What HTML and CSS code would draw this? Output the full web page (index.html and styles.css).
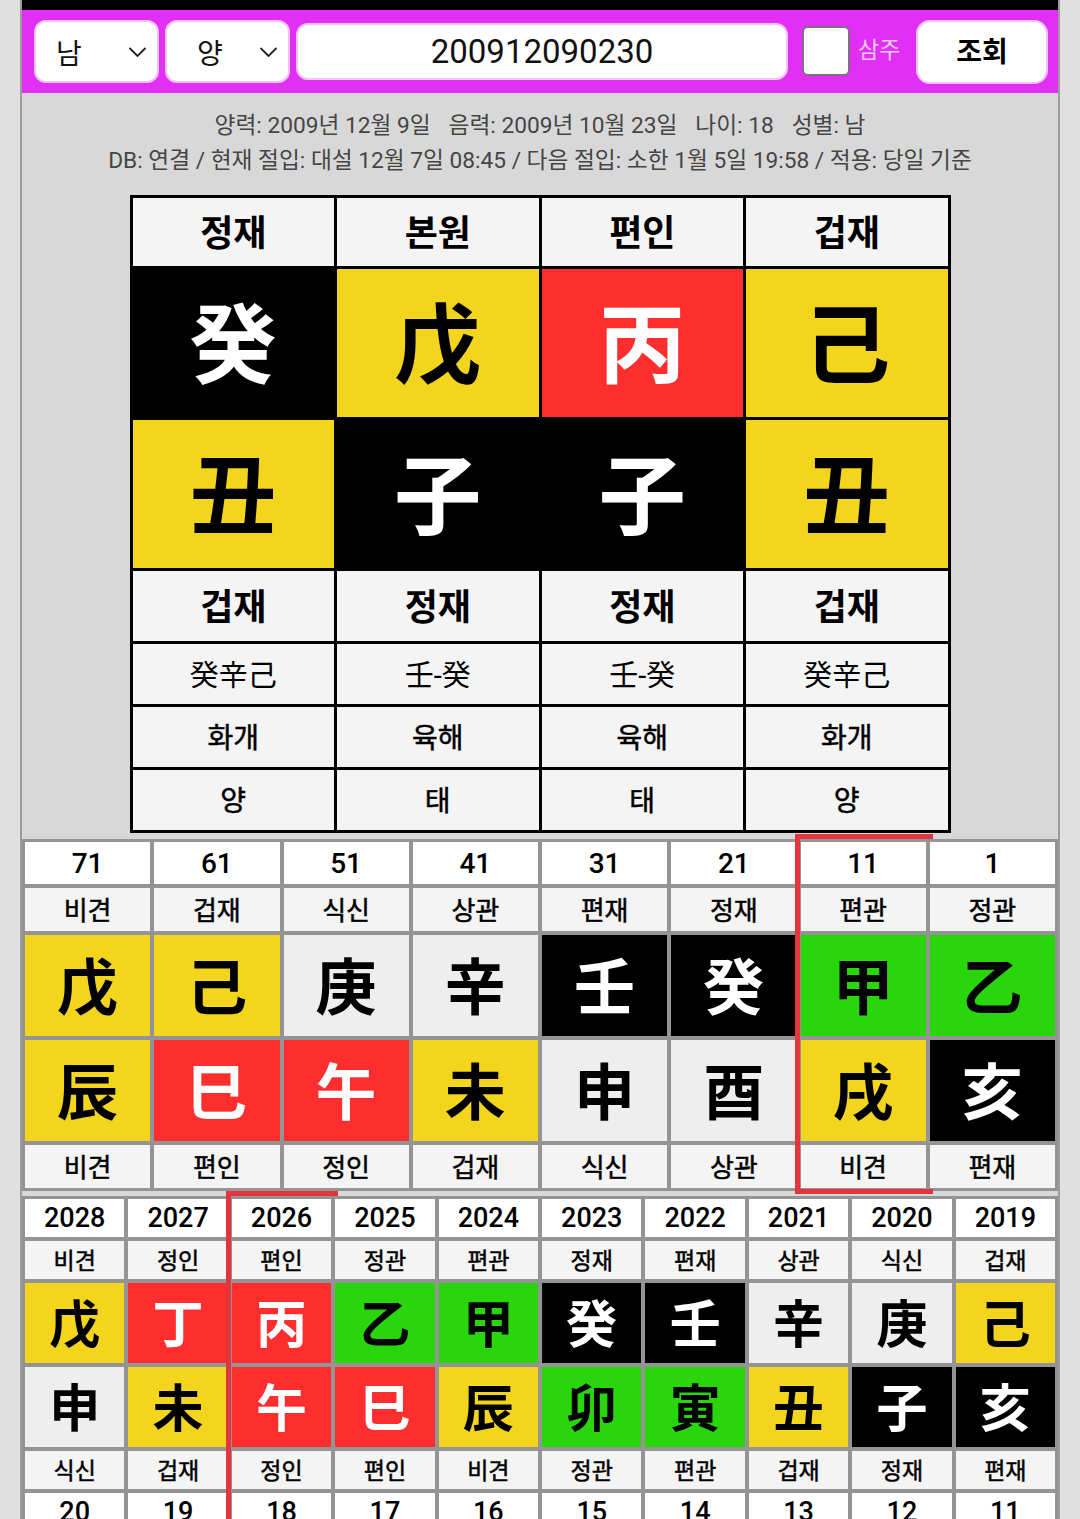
FILE: index.html
```html
<!DOCTYPE html>
<html lang="ko">
<head>
<meta charset="utf-8">
<title>사주 조회</title>
<link rel="stylesheet" href="styles.css">
</head>
<body>
<div class="page">
  <div class="topbar"></div>
  <div class="toolbar">
    <div class="select sel-gender"><span>남</span><svg class="chev" viewBox="0 0 18 10" width="19" height="10"><polyline points="1,1 9,9 17,1" fill="none" stroke="#222" stroke-width="1.8"/></svg></div>
    <div class="select sel-cal"><span>양</span><svg class="chev" viewBox="0 0 18 10" width="19" height="10"><polyline points="1,1 9,9 17,1" fill="none" stroke="#222" stroke-width="1.8"/></svg></div>
    <div class="input">200912090230</div>
    <div class="check"></div>
    <span class="samju">삼주</span>
    <div class="btn">조회</div>
  </div>

  <div class="info">
    <div class="line1"><span>양력: 2009년 12월 9일</span><span>음력: 2009년 10월 23일</span><span>나이: 18</span><span>성별: 남</span></div>
    <div class="line2">DB: 연결 / 현재 절입: 대설 12월 7일 08:45 / 다음 절입: 소한 1월 5일 19:58 / 적용: 당일 기준</div>
  </div>

  <div class="saju">
    <div class="c head">정재</div><div class="c head">본원</div><div class="c head">편인</div><div class="c head">겁재</div>
    <div class="c gz black">癸</div><div class="c gz yellow">戊</div><div class="c gz red">丙</div><div class="c gz yellow">己</div>
    <div class="c gz yellow">丑</div><div class="c gz black">子</div><div class="c gz black">子</div><div class="c gz yellow">丑</div>
    <div class="c head">겁재</div><div class="c head">정재</div><div class="c head">정재</div><div class="c head">겁재</div>
    <div class="c hid">癸辛己</div><div class="c hid">壬-癸</div><div class="c hid">壬-癸</div><div class="c hid">癸辛己</div>
    <div class="c sub">화개</div><div class="c sub">육해</div><div class="c sub">육해</div><div class="c sub">화개</div>
    <div class="c sub">양</div><div class="c sub">태</div><div class="c sub">태</div><div class="c sub">양</div>
  </div>

  <div class="daeun">
    <div class="col"><div class="num">71</div><div class="lbl">비견</div><div class="gz yellow">戊</div><div class="gz yellow">辰</div><div class="lbl">비견</div></div>
    <div class="col"><div class="num">61</div><div class="lbl">겁재</div><div class="gz yellow">己</div><div class="gz red">巳</div><div class="lbl">편인</div></div>
    <div class="col"><div class="num">51</div><div class="lbl">식신</div><div class="gz gray">庚</div><div class="gz red">午</div><div class="lbl">정인</div></div>
    <div class="col"><div class="num">41</div><div class="lbl">상관</div><div class="gz gray">辛</div><div class="gz yellow">未</div><div class="lbl">겁재</div></div>
    <div class="col"><div class="num">31</div><div class="lbl">편재</div><div class="gz black">壬</div><div class="gz gray">申</div><div class="lbl">식신</div></div>
    <div class="col"><div class="num">21</div><div class="lbl">정재</div><div class="gz black">癸</div><div class="gz gray">酉</div><div class="lbl">상관</div></div>
    <div class="col cur"><div class="num">11</div><div class="lbl">편관</div><div class="gz green">甲</div><div class="gz yellow">戌</div><div class="lbl">비견</div></div>
    <div class="col"><div class="num">1</div><div class="lbl">정관</div><div class="gz green">乙</div><div class="gz black">亥</div><div class="lbl">편재</div></div>
  </div>

  <div class="seun">
    <div class="col"><div class="num">2028</div><div class="lbl">비견</div><div class="gz yellow">戊</div><div class="gz gray">申</div><div class="lbl">식신</div><div class="num">20</div></div>
    <div class="col"><div class="num">2027</div><div class="lbl">정인</div><div class="gz red">丁</div><div class="gz yellow">未</div><div class="lbl">겁재</div><div class="num">19</div></div>
    <div class="col cur"><div class="num">2026</div><div class="lbl">편인</div><div class="gz red">丙</div><div class="gz red">午</div><div class="lbl">정인</div><div class="num">18</div></div>
    <div class="col"><div class="num">2025</div><div class="lbl">정관</div><div class="gz green">乙</div><div class="gz red">巳</div><div class="lbl">편인</div><div class="num">17</div></div>
    <div class="col"><div class="num">2024</div><div class="lbl">편관</div><div class="gz green">甲</div><div class="gz yellow">辰</div><div class="lbl">비견</div><div class="num">16</div></div>
    <div class="col"><div class="num">2023</div><div class="lbl">정재</div><div class="gz black">癸</div><div class="gz green">卯</div><div class="lbl">정관</div><div class="num">15</div></div>
    <div class="col"><div class="num">2022</div><div class="lbl">편재</div><div class="gz black">壬</div><div class="gz green">寅</div><div class="lbl">편관</div><div class="num">14</div></div>
    <div class="col"><div class="num">2021</div><div class="lbl">상관</div><div class="gz gray">辛</div><div class="gz yellow">丑</div><div class="lbl">겁재</div><div class="num">13</div></div>
    <div class="col"><div class="num">2020</div><div class="lbl">식신</div><div class="gz gray">庚</div><div class="gz black">子</div><div class="lbl">정재</div><div class="num">12</div></div>
    <div class="col"><div class="num">2019</div><div class="lbl">겁재</div><div class="gz yellow">己</div><div class="gz black">亥</div><div class="lbl">편재</div><div class="num">11</div></div>
  </div>
</div>
</body>
</html>
```

FILE: styles.css
```css
html, body {
  margin: 0;
  padding: 0;
  height: 1519px;
  overflow: hidden;
}
body {
  background: #e0e0e0;
  font-family: Roboto, "Noto Sans CJK KR", sans-serif;
  color: #000;
}
.page {
  width: 1036px;
  min-height: 1600px;
  margin-left: 20px;
  border-left: 2px solid #9c9c9c;
  border-right: 2px solid #9c9c9c;
  background: #d8d8d8;
}
.topbar {
  height: 10px;
  background: #000;
}
.toolbar {
  height: 83px;
  background: #e12ff5;
  display: flex;
  align-items: center;
  padding: 0 10px 0 12px;
  box-sizing: border-box;
}
.select {
  box-sizing: border-box;
  width: 125px;
  height: 63px;
  background: #fff;
  border: 2px solid #f1c6f7;
  border-radius: 12px;
  display: flex;
  align-items: center;
  justify-content: space-between;
  font-size: 28px;
  color: #111;
  margin-right: 6px;
}
.sel-gender { padding: 0 10px 0 20px; }
.sel-cal { padding: 0 10px 0 30px; }
.chev { display: block; }
.input {
  box-sizing: border-box;
  width: 492px;
  height: 57px;
  background: #fff;
  border: 2px solid #f1c6f7;
  border-radius: 12px;
  display: flex;
  align-items: center;
  justify-content: center;
  font-size: 33px;
  color: #111;
}
.check {
  box-sizing: border-box;
  width: 48px;
  height: 50px;
  margin-left: 14px;
  margin-bottom: 2px;
  background: #fff;
  border: 2px solid #7f6f84;
  border-radius: 6px;
}
.samju {
  margin-left: 8px;
  margin-bottom: 8px;
  font-size: 23px;
  color: #f7cdfa;
}
.btn {
  box-sizing: border-box;
  margin-left: auto;
  width: 132px;
  height: 64px;
  background: #fff;
  border: 2px solid #f1c6f7;
  border-radius: 14px;
  display: flex;
  align-items: center;
  justify-content: center;
  font-size: 28px;
  font-weight: 700;
  padding-bottom: 3px;
}
.info {
  padding-top: 15px;
  font-size: 22.7px;
  line-height: 35px;
  color: #454545;
  text-align: center;
}
.line1 {
  display: flex;
  justify-content: center;
  gap: 18px;
}
.saju {
  box-sizing: border-box;
  width: 821px;
  margin: 17px auto 0;
  background: #000;
  padding: 3px;
  display: grid;
  grid-template-columns: repeat(4, 1fr);
  grid-template-rows: 68px 148px 148px 70px 60px 60px 60px;
  gap: 3px;
}
.c {
  display: flex;
  align-items: center;
  justify-content: center;
  background: #f4f4f4;
}
.c.head {
  font-size: 36px;
  font-weight: 700;
  padding-bottom: 4px;
}
.c.gz {
  font-size: 87px;
  font-weight: 700;
  padding-bottom: 8px;
}
.c.hid {
  font-size: 29px;
  padding-bottom: 2px;
}
.c.sub {
  font-size: 28px;
  -webkit-text-stroke: 0.5px currentColor;
  padding-bottom: 2px;
}
.yellow { background: #f4d51d !important; color: #000; }
.red { background: #fe2e2e !important; color: #fff; }
.black { background: #000 !important; color: #fff; }
.green { background: #29d60b !important; color: #000; }
.gray { background: #eeeeee !important; color: #000; }

.daeun, .seun {
  display: flex;
  gap: 4px;
  padding: 3px;
  background: #949494;
}
.daeun { margin-top: 6px; }
.seun { margin-top: 5px; }
.col {
  flex: 1 1 0;
  display: flex;
  flex-direction: column;
  gap: 4px;
  min-width: 0;
}
.col > div {
  display: flex;
  align-items: center;
  justify-content: center;
}
.num {
  background: #fff;
  font-weight: 500;
}
.lbl {
  background: #f4f4f4;
  -webkit-text-stroke: 0.5px currentColor;
}
.col .gz { font-weight: 700; padding-bottom: 4px; box-sizing: border-box; }

.daeun .num { height: 42px; font-size: 28px; }
.daeun .lbl { height: 43px; font-size: 26px; padding-bottom: 2px; box-sizing: border-box; }
.daeun .gz { height: 101px; font-size: 61px; }

.seun .num { height: 38px; font-size: 27px; }
.seun .lbl { height: 38px; font-size: 23px; padding-bottom: 2px; box-sizing: border-box; }
.seun .gz { height: 80px; font-size: 51px; }

.col.cur { position: relative; }
.col.cur::after {
  content: "";
  position: absolute;
  left: -6px;
  right: -7px;
  top: -8px;
  bottom: -6px;
  border: 5px solid #e3353d;
  border-right: none;
  pointer-events: none;
}
```
